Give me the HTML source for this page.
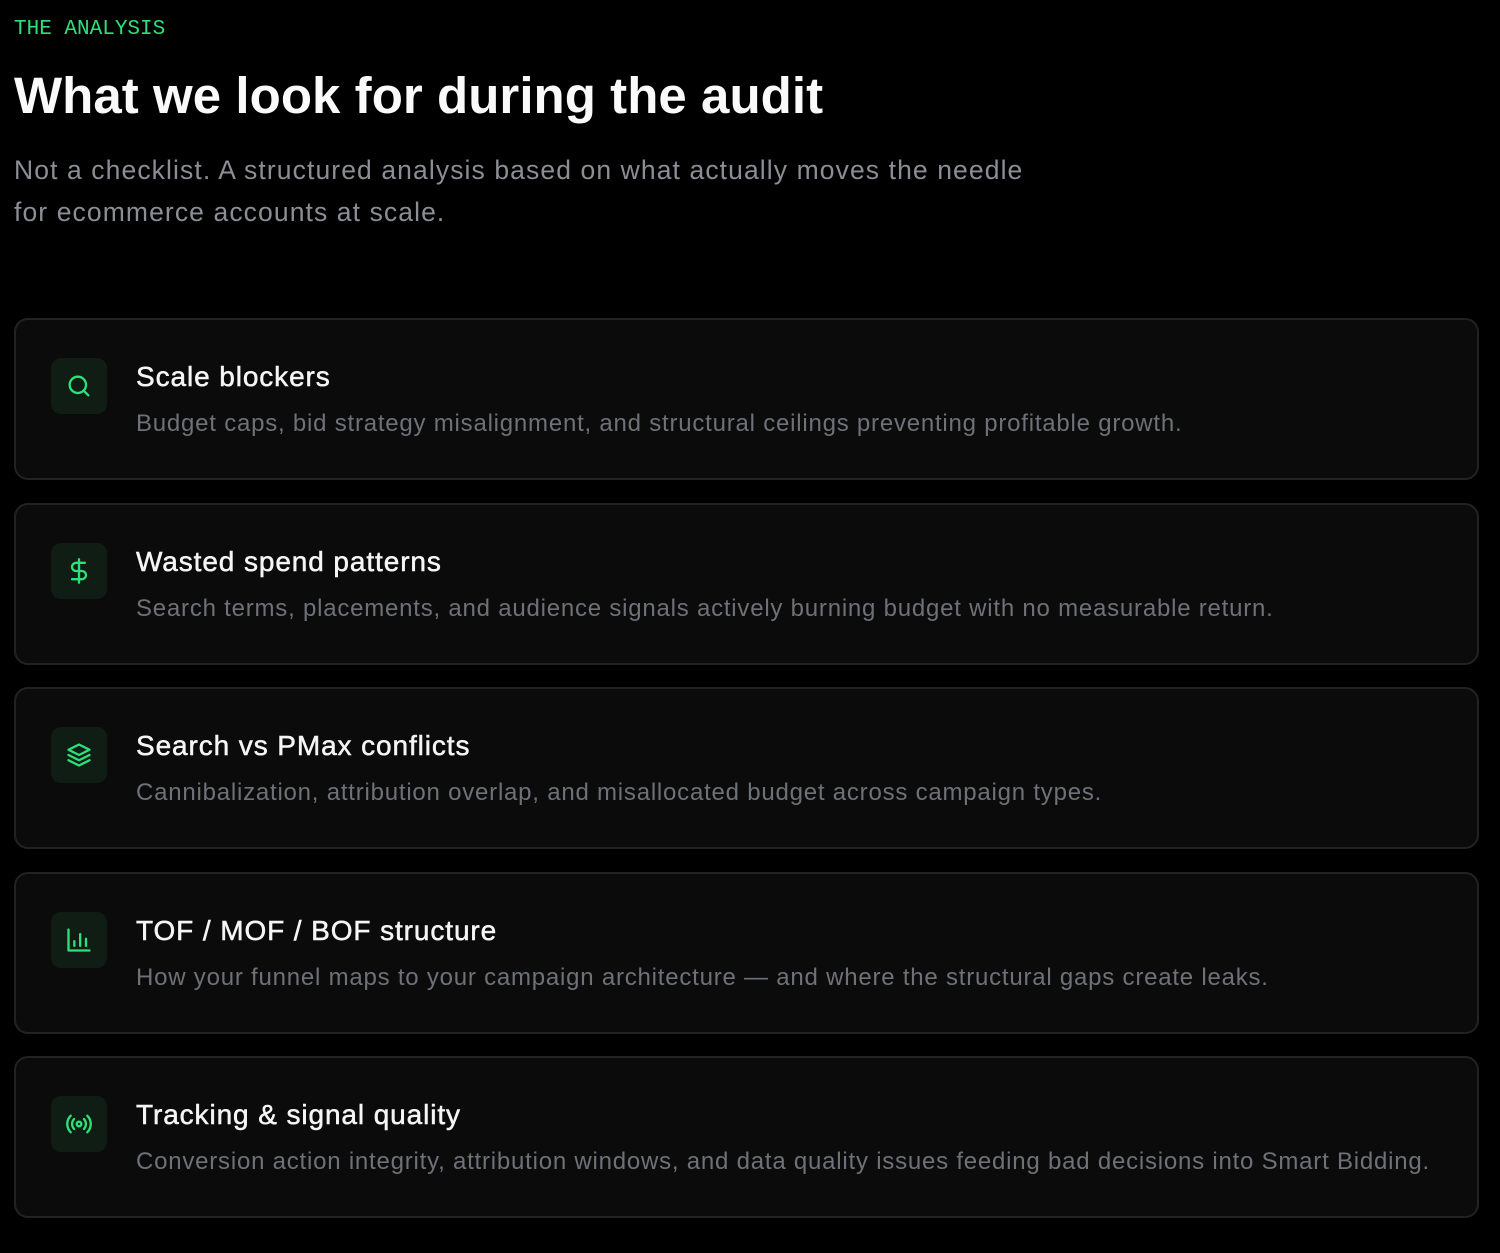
<!DOCTYPE html>
<html><head><meta charset="utf-8"><style>
*{margin:0;padding:0;box-sizing:border-box}
body{width:1500px;height:1253px;background:#000;font-family:"Liberation Sans",sans-serif;position:relative;overflow:hidden}
.lbl{position:absolute;left:14px;top:18px;font-family:"Liberation Mono",monospace;font-size:21px;color:#2ee07a}
h1{position:absolute;left:14px;top:66px;font-size:51px;font-weight:700;color:#fafafa;letter-spacing:0.05px}
.sub{position:absolute;left:14px;top:149px;font-size:26.5px;line-height:42px;color:#8b8e95;width:1200px;letter-spacing:1.1px}
.card{position:absolute;left:14px;width:1465px;height:162px;background:#0b0b0b;border:2px solid #222;border-radius:14px}
.ic{position:absolute;left:35px;top:38px;width:56px;height:56px;border-radius:10px;background:#0f1d14;display:flex;align-items:center;justify-content:center}
.t{position:absolute;left:120px;top:41px;font-size:28px;color:#f5f5f5;-webkit-text-stroke:0.5px #f5f5f5;letter-spacing:0.9px}
.d{position:absolute;left:120px;top:90px;font-size:24px;color:#6e7178;white-space:nowrap;letter-spacing:0.78px}
svg{width:28px;height:28px;fill:none;stroke:#2ee07a;stroke-width:2;stroke-linecap:round;stroke-linejoin:round}
</style></head><body>
<div class="lbl">THE ANALYSIS</div>
<h1>What we look for during the audit</h1>
<div class="sub">Not a checklist. A structured analysis based on what actually moves the needle<br>for ecommerce accounts at scale.</div>

<div class="card" style="top:318px"><div class="ic"><svg viewBox="0 0 24 24"><circle cx="11" cy="11" r="7"/><path d="M20 20l-4-4"/></svg></div>
<div class="t">Scale blockers</div><div class="d">Budget caps, bid strategy misalignment, and structural ceilings preventing profitable growth.</div></div>

<div class="card" style="top:503px"><div class="ic"><svg viewBox="0 0 24 24"><path d="M12 2v20"/><path d="M17 5H9.5a3.5 3.5 0 0 0 0 7h5a3.5 3.5 0 0 1 0 7H6"/></svg></div>
<div class="t">Wasted spend patterns</div><div class="d">Search terms, placements, and audience signals actively burning budget with no measurable return.</div></div>

<div class="card" style="top:687px"><div class="ic"><svg viewBox="0 0 24 24"><path d="M12 3l9 4.5-9 4.5-9-4.5z"/><path d="M3 12l9 4.5 9-4.5"/><path d="M3 16.5l9 4.5 9-4.5"/></svg></div>
<div class="t">Search vs PMax conflicts</div><div class="d">Cannibalization, attribution overlap, and misallocated budget across campaign types.</div></div>

<div class="card" style="top:872px"><div class="ic"><svg viewBox="0 0 24 24"><path d="M3 3v18h18"/><path d="M8 17v-4"/><path d="M13 17V7"/><path d="M18 17v-6"/></svg></div>
<div class="t">TOF / MOF / BOF structure</div><div class="d">How your funnel maps to your campaign architecture — and where the structural gaps create leaks.</div></div>

<div class="card" style="top:1056px"><div class="ic"><svg viewBox="0 0 24 24"><circle cx="12" cy="12" r="2"/><path d="M16.2 7.8a6 6 0 0 1 0 8.4"/><path d="M7.8 16.2a6 6 0 0 1 0-8.4"/><path d="M19.1 4.9a10 10 0 0 1 0 14.2"/><path d="M4.9 19.1a10 10 0 0 1 0-14.2"/></svg></div>
<div class="t">Tracking &amp; signal quality</div><div class="d">Conversion action integrity, attribution windows, and data quality issues feeding bad decisions into Smart Bidding.</div></div>
</body></html>
